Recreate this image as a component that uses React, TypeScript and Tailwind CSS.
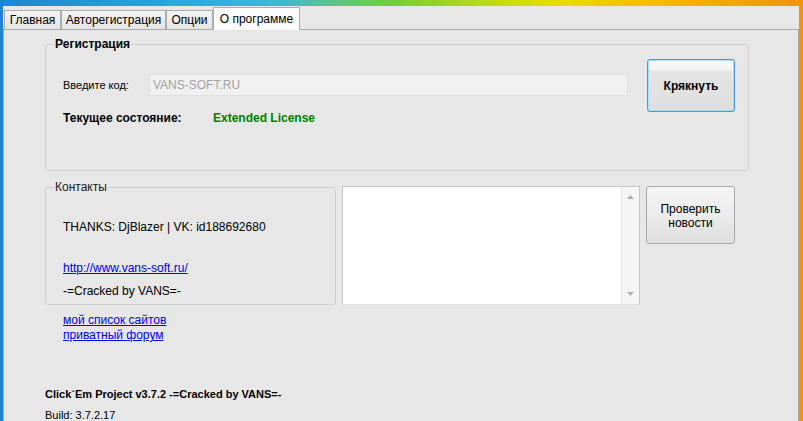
import React from "react";

const tabs = [
  { label: "Главная", w: "w-[57px]" },
  { label: "Авторегистрация", w: "w-[105px]" },
  { label: "Опции", w: "w-[47px]" },
];

function GroupTitle({ children, bold }: { children: React.ReactNode; bold?: boolean }) {
  return (
    <span
      className={`absolute -top-[9px] left-[8px] px-[1px] bg-[#e7e7e7] text-[12px] leading-[16px] ${
        bold ? "font-bold text-black" : "text-[#1a1a1a]"
      }`}
    >
      {children}
    </span>
  );
}

export default function App() {
  return (
    <div className="w-[803px] h-[421px] overflow-hidden flex flex-col bg-[linear-gradient(90deg,#1c86d4_0%,#22a6e0_20%,#3bbcd0_35%,#7ccf2c_50%,#c9dc10_63%,#e8dc00_70%,#f3b400_85%,#f5900c_100%)] font-['Liberation_Sans',Arial,sans-serif] text-black">
      <div className="h-[6px] shrink-0" />
      <div className="flex-1 flex flex-col ml-[3px] mr-[4px] bg-[#e7e7e7]">
        {/* tab strip */}
        <div className="h-[23px] shrink-0 flex items-end pl-[1px]">
          {tabs.map((t) => (
            <div
              key={t.label}
              className={`${t.w} h-[19px] flex items-center justify-center border border-b-0 border-[#acacac] bg-[linear-gradient(#f4f4f4,#e3e3e3)] text-[12px] leading-none`}
            >
              {t.label}
            </div>
          ))}
          <div className="w-[87px] h-[23px] -mb-px relative z-10 flex items-center justify-center pb-[1px] border border-b-0 border-[#acacac] bg-[#fbfbfb] text-[12px] leading-none">
            О программе
          </div>
        </div>

        {/* tab page */}
        <div className="flex-1 border-t border-l border-r border-[#a9a9a9] bg-[#e7e7e7] pl-[41px] pt-[14px] flex flex-col">
          {/* Регистрация */}
          <div className="relative w-[704px] h-[127px] border border-[#cfcfcf] rounded-[3px] flex pl-[17px] pt-[14px] pr-[13px]">
            <GroupTitle bold>Регистрация</GroupTitle>
            <div className="flex-1 mt-[15px] flex flex-col">
              <div className="flex items-center h-[22px]">
                <span className="w-[86px] text-[11px]">Введите код:</span>
                <div className="flex-1 h-[22px] bg-[#f0f0f0] border border-[#e0e0e0] flex items-center pl-[3px] text-[12px] text-[#a3a3a3]">
                  VANS-SOFT.RU
                </div>
              </div>
              <div className="flex mt-[14px] text-[12px] leading-[16px] font-bold">
                <span className="w-[150px]">Текущее состояние:</span>
                <span className="text-[#008000]">Extended License</span>
              </div>
            </div>
            <button className="ml-[19px] w-[88px] h-[53px] rounded-[3px] border border-[#3a9de4] shadow-[inset_0_0_0_1px_#a9dcf6] bg-[linear-gradient(#fafafa_0%,#f3f3f3_20%,#e4e4e4_22%,#dedede_100%)] text-[12px] font-bold">
              Крякнуть
            </button>
          </div>

          {/* second row */}
          <div className="flex items-start gap-[6px] mt-[15px]">
            <div className="relative mt-[1px] w-[291px] h-[118px] border border-[#cfcfcf] rounded-[3px] pl-[17px] pt-[31px] text-[12px] leading-[16px]">
              <GroupTitle>Контакты</GroupTitle>
              <div>THANKS: DjBlazer | VK: id188692680</div>
              <div className="mt-[25px]">
                <a href="#" className="text-[#0000ff] underline">
                  http://www.vans-soft.ru/
                </a>
              </div>
              <div className="mt-[7px]">-=Cracked by VANS=-</div>
            </div>

            <div className="w-[298px] h-[119px] bg-white border border-[#c6c6c6] border-b-[#e0e0e0] flex justify-end">
              <div className="w-[18px] h-full bg-[#f5f5f5] border-l border-[#e4e4e4] flex flex-col items-center justify-between py-[8px]">
                <svg width="7" height="4" viewBox="0 0 7 4">
                  <path d="M0 4 L3.5 0 L7 4 Z" fill="#b0b0b0" />
                </svg>
                <svg width="7" height="4" viewBox="0 0 7 4">
                  <path d="M0 0 L3.5 4 L7 0 Z" fill="#b0b0b0" />
                </svg>
              </div>
            </div>

            <button className="w-[89px] h-[58px] rounded-[3px] border border-[#a8a8a8] bg-[linear-gradient(#f4f4f4_0%,#ececec_50%,#dddddd_100%)] text-[12px] leading-[14px] pt-[1px]">
              Проверить
              <br />
              новости
            </button>
          </div>

          {/* links */}
          <div className="mt-[8px] ml-[18px] flex flex-col text-[12px] leading-[15px]">
            <a href="#" className="text-[#0000ff] underline w-fit">
              мой список сайтов
            </a>
            <a href="#" className="text-[#0000ff] underline w-fit">
              приватный форум
            </a>
          </div>

          {/* footer */}
          <div className="mt-[43px] text-[11px] leading-[16px] font-bold">
            Click`Em Project v3.7.2 -=Cracked by VANS=-
          </div>
          <div className="mt-[5px] text-[11px] leading-[16px]">Build: 3.7.2.17</div>
        </div>
      </div>
    </div>
  );
}
